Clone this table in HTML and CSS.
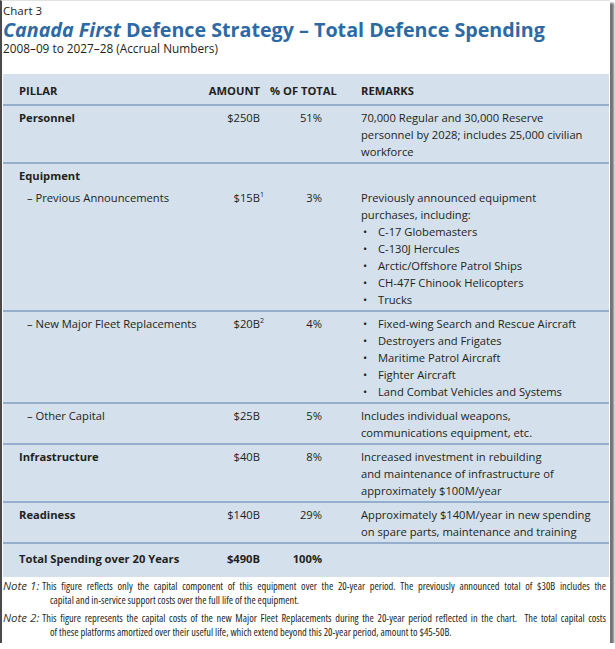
FILE: index.html
```html
<!DOCTYPE html>
<html lang="en">
<head>
    <meta charset="UTF-8">
    <meta name="viewport" content="width=device-width, initial-scale=1.0">
    <title>Total Defence Spending</title>
    <link rel="stylesheet" href="styles.css">
</head>
<body>
    <div class="page">
        <p class="chart-label">Chart 3</p>
        <h1 class="chart-title"><em>Canada First</em> Defence Strategy – Total Defence Spending</h1>
        <p class="chart-sub">2008–09 to 2027–28 (Accrual Numbers)</p>

        <div class="panel">
            <div class="row head">
                <div>PILLAR</div>
                <div class="amt">AMOUNT</div>
                <div class="pct">% OF TOTAL</div>
                <div class="rem">REMARKS</div>
            </div>

            <div class="row">
                <div class="pillar">Personnel</div>
                <div class="amt">$250B</div>
                <div class="pct">51%</div>
                <div class="rem">70,000 Regular and 30,000 Reserve<br>personnel by 2028; includes 25,000 civilian<br>workforce</div>
            </div>

            <div class="row group">
                <div class="pillar">Equipment</div>
            </div>

            <div class="row">
                <div class="sub-pillar">– Previous Announcements</div>
                <div class="amt">$15B<sup>1</sup></div>
                <div class="pct">3%</div>
                <div class="rem">
                    Previously announced equipment<br>purchases, including:
                    <ul class="items">
                        <li>C-17 Globemasters</li>
                        <li>C-130J Hercules</li>
                        <li>Arctic/Offshore Patrol Ships</li>
                        <li>CH-47F Chinook Helicopters</li>
                        <li>Trucks</li>
                    </ul>
                </div>
            </div>

            <div class="row">
                <div class="sub-pillar">– New Major Fleet Replacements</div>
                <div class="amt">$20B<sup>2</sup></div>
                <div class="pct">4%</div>
                <div class="rem">
                    <ul class="items">
                        <li>Fixed-wing Search and Rescue Aircraft</li>
                        <li>Destroyers and Frigates</li>
                        <li>Maritime Patrol Aircraft</li>
                        <li>Fighter Aircraft</li>
                        <li>Land Combat Vehicles and Systems</li>
                    </ul>
                </div>
            </div>

            <div class="row">
                <div class="sub-pillar">– Other Capital</div>
                <div class="amt">$25B</div>
                <div class="pct">5%</div>
                <div class="rem">Includes individual weapons,<br>communications equipment, etc.</div>
            </div>

            <div class="row">
                <div class="pillar">Infrastructure</div>
                <div class="amt">$40B</div>
                <div class="pct">8%</div>
                <div class="rem">Increased investment in rebuilding<br>and maintenance of infrastructure of<br>approximately $100M/year</div>
            </div>

            <div class="row">
                <div class="pillar">Readiness</div>
                <div class="amt">$140B</div>
                <div class="pct">29%</div>
                <div class="rem">Approximately $140M/year in new spending<br>on spare parts, maintenance and training</div>
            </div>

            <div class="row total">
                <div class="pillar">Total Spending over 20 Years</div>
                <div class="amt">$490B</div>
                <div class="pct">100%</div>
                <div class="rem"></div>
            </div>
        </div>

        <div class="notes">
            <div class="note">
                <div class="note-first">
                    <span class="note-label">Note 1:</span>
                    <span class="note-line">This figure reflects only the capital component of this equipment over the 20-year period. The previously announced total of $30B includes the</span>
                </div>
                <p class="note-rest">capital and in-service support costs over the full life of the equipment.</p>
            </div>
            <div class="note">
                <div class="note-first">
                    <span class="note-label">Note 2:</span>
                    <span class="note-line">This figure represents the capital costs of the new Major Fleet Replacements during the 20-year period reflected in the chart. &nbsp;The total capital costs</span>
                </div>
                <p class="note-rest">of these platforms amortized over their useful life, which extend beyond this 20-year period, amount to $45-50B.</p>
            </div>
        </div>
    </div>
</body>
</html>
```

FILE: styles.css
```css
* {
    margin: 0;
    padding: 0;
    box-sizing: border-box;
}

body {
    background-color: #ffffff;
    font-family: 'Open Sans', 'Liberation Sans', sans-serif;
    color: #231f20;
}

.page {
    width: 610px;
    height: 643px;
    border-left: 2px solid #4a4a4a;
    border-top: 1px solid #e2e2e2;
    background-color: #ffffff;
    box-shadow: 4px 3px 2px rgba(0, 0, 0, 0.55);
}

.chart-label {
    font-size: 11.5px;
    line-height: 16px;
    padding-top: 2px;
    padding-left: 1px;
}

.chart-title {
    font-size: 19.7px;
    line-height: 22px;
    font-weight: bold;
    color: #2d6aa3;
    padding-left: 1px;
}

.chart-sub {
    font-size: 11.8px;
    line-height: 15px;
    padding-left: 1px;
}

.panel {
    margin-top: 18px;
    margin-left: 1px;
    width: 606px;
    background-color: #d4e0eb;
    padding-left: 16px;
    font-size: 11.2px;
    line-height: 17px;
}

.row {
    display: grid;
    grid-template-columns: 183px 58px 62px 1fr;
    padding-top: 3px;
    padding-bottom: 2px;
    border-bottom: 2px solid #94aecb;
    margin-left: -16px;
    padding-left: 16px;
}

.row.group {
    border-bottom: none;
}

.row.head {
    padding-top: 8px;
    padding-bottom: 5px;
    font-weight: bold;
}

.row.total {
    padding-top: 6px;
    padding-bottom: 10px;
    border-bottom: none;
    font-weight: bold;
}

.pillar {
    font-weight: bold;
    white-space: nowrap;
}

.sub-pillar {
    padding-left: 8px;
    white-space: nowrap;
}

.amt {
    text-align: right;
    white-space: nowrap;
}

.pct {
    text-align: right;
}

.head .pct {
    text-align: left;
    padding-left: 10px;
    white-space: nowrap;
}

.rem {
    padding-left: 39px;
    white-space: nowrap;
}

.amt sup {
    font-size: 7px;
    line-height: 0;
    vertical-align: 5px;
    margin-right: -4px;
}

.items {
    list-style-type: none;
}

.items li {
    position: relative;
    padding-left: 17px;
}

.items li::before {
    content: "•";
    position: absolute;
    left: 2px;
}

.notes {
    padding-top: 2px;
    font-size: 10.4px;
    line-height: 14px;
    font-stretch: 75%;
}

.note {
    margin-bottom: 4px;
}

.note-first {
    display: flex;
    gap: 3px;
    padding-right: 4px;
}

.note-label {
    font-style: italic;
    font-size: 11.5px;
    font-stretch: 100%;
    padding-left: 1px;
    color: #333333;
}

.note-line {
    flex: 1;
    text-align: justify;
    text-align-last: justify;
}

.note-rest {
    padding-left: 48px;
}
```
